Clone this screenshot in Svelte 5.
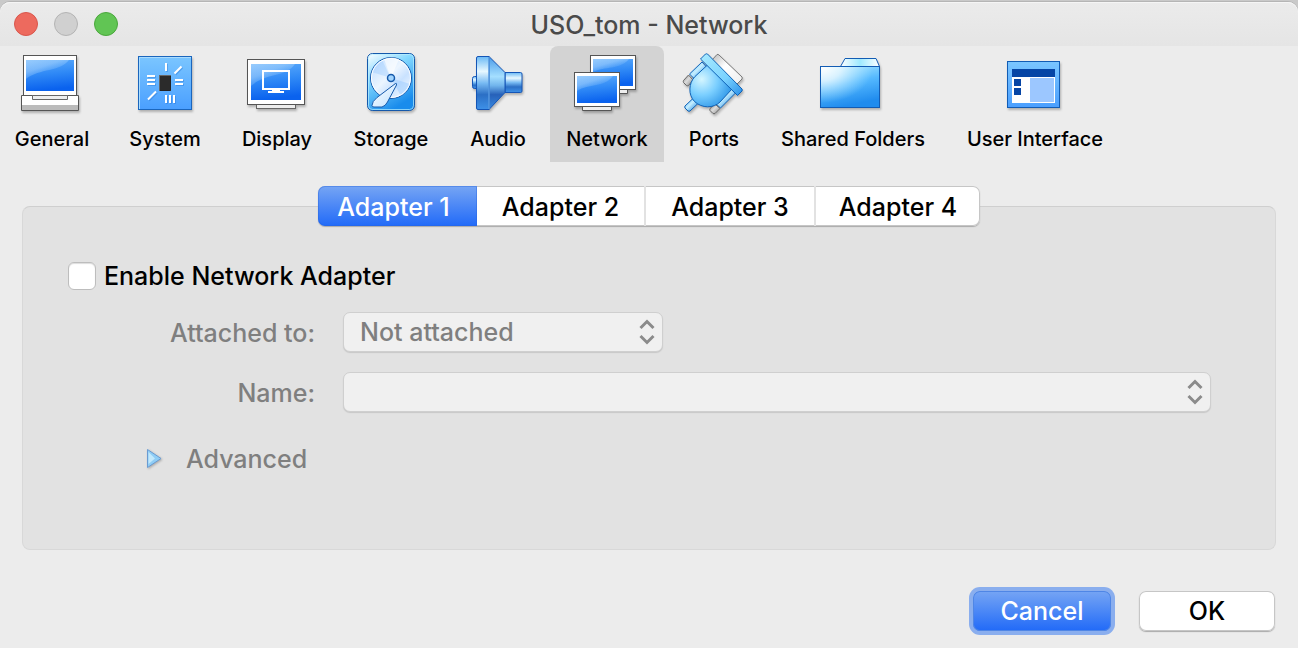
<script>
  const sections = [
    'General', 'System', 'Display', 'Storage', 'Audio',
    'Network', 'Ports', 'Shared Folders', 'User Interface'
  ];
  const adapters = ['Adapter 1', 'Adapter 2', 'Adapter 3', 'Adapter 4'];
  let section = $state('Network');
  let adapter = $state('Adapter 1');
  let enabled = $state(false);
</script>

<svelte:head><title>USO_tom - Network</title></svelte:head>

{#snippet chevrons()}
  <svg class="chevrons" viewBox="0 0 16 26" aria-hidden="true">
    <path d="M1.500 9 8 2.500l6.500 6.500M1.500 17 8 23.500l6.500-6.500" />
  </svg>
{/snippet}

{#snippet icon(name)}
  <svg class="icon" viewBox="0 0 64 64" aria-hidden="true">
    {#if name === 'General'}
      <rect x="3.500" y="5.500" width="53" height="40" fill="#fff" stroke="#555" />
      <rect x="6" y="10" width="48" height="31" fill="url(#screen)" />
      <path d="M6 10h43C40 22 20 18 6 29z" fill="url(#gloss)" />
      <path d="M1.500 45.500h57v15h-57z" fill="#fff" stroke="#555" />
      <path d="M2 55h56v5H2z" fill="#bbb" />
      <path d="M12.500 45.500h35v4h-35z" fill="#eee" stroke="#666" />
    {:else if name === 'System'}
      <rect x="5.500" y="6.500" width="53" height="53" fill="url(#board)" stroke="#1b66bd" />
      <path d="M6.500 59V7.500H58" fill="none" stroke="#a9dcff" />
      <path d="M33 13v8M41.500 23.500l7-7M14 26h8M14 30h8M14 34h8M42 30h8M42 34h8M33 45v8M37 45v8M41 45v8M15 49.500l8-8" stroke="#1c6cd0" stroke-width="2" opacity=".35" transform="translate(1 1)" />
      <path d="M33 13v8M41.500 23.500l7-7M14 26h8M14 30h8M14 34h8M42 30h8M42 34h8M33 45v8M37 45v8M41 45v8M15 49.500l8-8" stroke="#fff" stroke-width="2" />
      <rect x="26.500" y="25.500" width="11" height="15" fill="#2b2b2b" stroke="#666" />
      <path d="M37.500 26v14.500H27" fill="none" stroke="#222" />
    {:else if name === 'Display'}
      <rect x="11.500" y="54.500" width="39" height="4" fill="#eee" stroke="#666" />
      <rect x="2.500" y="9.500" width="57" height="45" fill="#fff" stroke="#555" />
      <rect x="6" y="14" width="50" height="36" fill="url(#screen)" />
      <path d="M6 14h44C40 28 22 22 6 36z" fill="url(#gloss)" />
      <path d="M18 21h26v18H18z" fill="none" stroke="#fff" stroke-width="2" />
      <path d="M27 40h8v1h4v2H23v-2h4z" fill="#fff" />
    {:else if name === 'Storage'}
      <rect x="8.500" y="3.500" width="47" height="57" rx="5" fill="url(#drive)" stroke="#1559ab" />
      <rect x="9.500" y="4.500" width="45" height="55" rx="4" fill="none" stroke="#b9efff" opacity=".7" />
      <circle cx="32" cy="28" r="20.500" fill="url(#disc)" stroke="#1559ab" />
      <path d="M32 28 12.500 22A20 20 0 0 1 23 10z" fill="#9ccbff" opacity=".4" />
      <path d="M32 28 51 34A20 20 0 0 1 42 46z" fill="#9ccbff" opacity=".5" />
      <path d="M32 28 25 9A20 20 0 0 1 40 9z" fill="#fff" opacity=".6" />
      <circle cx="32" cy="28" r="19.500" fill="none" stroke="#fff" />
      <circle cx="32" cy="28" r="3.500" fill="#a2d5ff" stroke="#1559ab" stroke-width="1.500" />
      <path d="M36.500 33.500 18 47.500q-5 4-5 8 0 1.500 2 1.500h8q3.500-1 5.500-5l9-17q0-2.500-1-1.500z" fill="url(#arm)" stroke="#1559ab" />
    {:else if name === 'Audio'}
      <rect x="6.500" y="26.500" width="7" height="12" rx="2" fill="url(#metal)" stroke="#1455b6" />
      <path d="M39 22.500h15.500q1.500 0 1.500 1.500v17q0 1.500-1.500 1.500H39z" fill="url(#metal)" stroke="#1455b6" />
      <path d="M23 6.500 39 22.500v20l-16 17z" fill="url(#cone)" stroke="#1455b6" />
      <path d="M12 6.500h11v53H12q-1.500 0-1.500-1.500V8q0-1.500 1.500-1.500z" fill="url(#metal)" stroke="#1455b6" />
      <path d="M23 7v52" stroke="#77baf4" />
    {:else if name === 'Network'}
      <path d="M40 39.500h12.500v4H40z" fill="#eee" stroke="#555" />
      <rect x="15.500" y="5.500" width="45" height="34" fill="#fff" stroke="#555" />
      <rect x="18" y="9" width="40" height="27" fill="url(#screen)" />
      <path d="M18 9h36C45 20 30 16 18 22z" fill="url(#gloss)" />
      <path d="M7.500 56.500h29v4h-29z" fill="#eee" stroke="#555" />
      <rect x="-.5" y="22.500" width="45" height="34" fill="#fff" stroke="#555" />
      <rect x="2" y="26" width="40" height="27" fill="url(#screen)" />
      <path d="M2 26h36C29 38 14 33 2 41z" fill="url(#gloss)" />
    {:else if name === 'Ports'}
      <path d="m30 10 5-5.500q1-.5 2 .5l23 22q.5 1 0 2l-6 6z" fill="url(#plug)" stroke="#777" />
      <path d="m20 12 5 5.500-12 12-5.500-5.500z" fill="url(#metalDiag)" stroke="#0e61b6" />
      <path d="m6.500 25 4.500 5-4.500 5.500q-1 .5-2 0l-3-3q-.5-1 0-2z" fill="url(#cap)" stroke="#666" />
      <path d="m48 38 5.500 5-15 15-5.500-5z" fill="url(#metalDiag)" stroke="#0e61b6" />
      <path d="m33 54 5 4.500-5 5q-1 .5-2 0l-3-3q-.5-1 0-2z" fill="url(#cap)" stroke="#666" />
      <path d="m12 47.500 5 5-9 8.500q-1 .5-2 0l-3-3q-.5-1 0-2z" fill="url(#metalDiag)" stroke="#0e61b6" />
      <path d="M26 14.500 13 26.500C6.500 33 6 45 12.500 51.500 20 58.500 31.500 58.500 38 52L50 39z" fill="url(#ball)" stroke="#0e61b6" />
      <path d="m18.500 9 5-5q1-.5 2 0l34.500 35q.5 1 0 2l-4.500 4.500z" fill="url(#plate)" stroke="#0e61b6" />
    {:else if name === 'Shared Folders'}
      <path d="m19.500 16.500 4.500-8h31l3.500 8z" fill="url(#tabfill)" stroke="#125cb4" />
      <rect x="-.5" y="16.500" width="59" height="41" fill="url(#folder)" stroke="#125cb4" />
      <rect width="58" height="40" y="17" fill="url(#foldergloss)" />
    {:else}
      <rect x="4.500" y="11.500" width="52" height="46" fill="url(#board)" stroke="#125cb4" />
      <path d="M9 19h43v34H9z" fill="#fff" />
      <path d="M9 19h43v8H9zM11 29h7v7h-7zM11 38h7v7h-7z" fill="#0645a5" />
      <path d="M27 28h24v24H27z" fill="#9cc7ff" />
    {/if}
  </svg>
{/snippet}

<svg class="defs" aria-hidden="true">
  <defs>
    <linearGradient id="screen" x2=".15" y2="1"><stop stop-color="#5cabfb" /><stop offset=".5" stop-color="#2f89f6" /><stop offset="1" stop-color="#0a62ee" /></linearGradient>
    <linearGradient id="gloss" x2=".8" y2="1"><stop stop-color="#c8e6ff" stop-opacity=".55" /><stop offset=".4" stop-color="#c0e2ff" stop-opacity=".45" /><stop offset=".75" stop-color="#a9d9ff" stop-opacity=".05" /></linearGradient>
    <linearGradient id="board" x2="0" y2="1"><stop stop-color="#7bc6ff" /><stop offset="1" stop-color="#4a9fff" /></linearGradient>
    <linearGradient id="drive" x2=".5" y2="1"><stop stop-color="#fff" /><stop offset=".4" stop-color="#83d8ff" /><stop offset="1" stop-color="#198cec" /></linearGradient>
    <linearGradient id="disc" x2="1" y2="1"><stop stop-color="#b9daff" /><stop offset=".45" stop-color="#ecf5ff" /><stop offset=".65" stop-color="#c9e2ff" /><stop offset="1" stop-color="#fff" /></linearGradient>
    <linearGradient id="arm" x2="1" y2="1"><stop stop-color="#fff" /><stop offset="1" stop-color="#bfe1ff" /></linearGradient>
    <linearGradient id="metal" x2="0" y2="1"><stop stop-color="#69b9f6" /><stop offset=".28" stop-color="#e8f8ff" /><stop offset=".5" stop-color="#78bbf3" /><stop offset=".72" stop-color="#2b6fc5" /><stop offset="1" stop-color="#3e91e8" /></linearGradient>
    <linearGradient id="cone" x2="0" y2="1"><stop stop-color="#4a9ae8" /><stop offset=".38" stop-color="#a5dfff" /><stop offset=".55" stop-color="#70b4ec" /><stop offset=".72" stop-color="#2761b9" /><stop offset="1" stop-color="#388ae0" /></linearGradient>
    <linearGradient id="metalDiag" x2="1" y2="1"><stop offset=".2" stop-color="#7cc8f8" /><stop offset=".45" stop-color="#c5eeff" /><stop offset=".8" stop-color="#3f9de8" /></linearGradient>
    <linearGradient id="cap" x2="1" y2="1"><stop stop-color="#777" /><stop offset=".45" stop-color="#ddd" /><stop offset="1" stop-color="#888" /></linearGradient>
    <linearGradient id="plate" x2="1" y2="1"><stop stop-color="#a9ebff" /><stop offset=".6" stop-color="#7ad2ff" /><stop offset="1" stop-color="#2a8fe8" /></linearGradient>
    <linearGradient id="plug" x2="1" y2="1"><stop stop-color="#bbb" /><stop offset=".4" stop-color="#fff" /><stop offset="1" stop-color="#eee" /></linearGradient>
    <radialGradient id="ball" cx=".28" cy=".35" r=".75"><stop stop-color="#d5f6ff" /><stop offset=".5" stop-color="#7bcfff" /><stop offset="1" stop-color="#2f97e8" /></radialGradient>
    <linearGradient id="tabfill" x2="1" y2="0"><stop stop-color="#fff" /><stop offset=".5" stop-color="#9feaff" /><stop offset="1" stop-color="#fff" /></linearGradient>
    <linearGradient id="folder" x2=".3" y2="1"><stop stop-color="#b5edff" /><stop offset=".5" stop-color="#55b9ff" /><stop offset="1" stop-color="#208cee" /></linearGradient>
    <radialGradient id="foldergloss" cx="0" cy="0" r="1"><stop stop-color="#fff" /><stop offset=".35" stop-color="#eefaff" stop-opacity=".8" /><stop offset=".9" stop-color="#bdeeff" stop-opacity="0" /></radialGradient>
  </defs>
</svg>

<main class="window">
  <header class="titlebar">
    <div class="lights">
      <button class="light close" aria-label="Close"></button>
      <button class="light minimise" aria-label="Minimise" disabled></button>
      <button class="light zoom" aria-label="Zoom"></button>
    </div>
    <h1>USO_tom - Network</h1>
  </header>

  <nav class="toolbar" aria-label="Settings">
    {#each sections as name}
      <button class="section" class:current={section === name} onclick={() => (section = name)}>
        {@render icon(name)}
        <span>{name}</span>
      </button>
    {/each}
  </nav>

  <section class="panel">
    <div class="tabs" role="tablist">
      {#each adapters as name}
        <button class="tab" role="tab" aria-selected={adapter === name} onclick={() => (adapter = name)}>{name}</button>
      {/each}
    </div>

    <div class="settings">
      <label class="enable">
        <input type="checkbox" bind:checked={enabled} />
        Enable Network Adapter
      </label>
      <div class="fields">
        <label for="attached">Attached to:</label>
        <div class="picker short">
          <select id="attached" disabled={!enabled}><option>Not attached</option></select>
          {@render chevrons()}
        </div>
        <label for="name">Name:</label>
        <div class="picker">
          <select id="name" disabled={!enabled}><option></option></select>
          {@render chevrons()}
        </div>
      </div>
      <button class="advanced" disabled={!enabled}>
        <svg viewBox="0 0 18 22" aria-hidden="true">
          <path d="M2.500 1.500v18L16 10.500z" fill="#8fcdf5" stroke="#6a9bd2" stroke-linejoin="round" />
          <path d="M3.500 4v12L10 10.500z" fill="#d3f0fc" opacity=".75" />
        </svg>
        Advanced
      </button>
    </div>
  </section>

  <footer>
    <button class="push primary">Cancel</button>
    <button class="push">OK</button>
  </footer>
</main>

<style>
  :global(body) {
    margin: 0;
    background: #c9c9c9;
  }
  .defs {
    position: absolute;
    width: 0;
    height: 0;
  }
  .window {
    box-sizing: border-box;
    min-height: calc(100vh - 2px);
    margin-top: 2px;
    display: flex;
    flex-direction: column;
    background: #ececec;
    border-radius: 10px 10px 0 0;
    box-shadow: 0 -1px #b5b5b5;
    font-family: Inter, "Liberation Sans", sans-serif;
    font-size: 25px;
    font-weight: 450;
    line-height: 32px;
    color: #000;
  }
  button, select {
    font: inherit;
    color: inherit;
    margin: 0;
    padding: 0;
    border: 0;
  }
  .titlebar {
    display: grid;
    grid-template-columns: 1fr auto 1fr;
    align-items: center;
    height: 44px;
    border-radius: 10px 10px 0 0;
    background: linear-gradient(#ebebeb, #e5e5e5);
    box-shadow: inset 0 1px #f5f5f5;
  }
  .lights {
    display: flex;
    gap: 16px;
    padding-left: 14px;
  }
  .light {
    width: 24px;
    height: 24px;
    border-radius: 50%;
    border: 1px solid #d9564c;
    background: #ed6a5e;
  }
  .minimise {
    border-color: #b4b4b4;
    background: #d0d0d0;
  }
  .zoom {
    border-color: #4aa73c;
    background: #61c554;
  }
  h1 {
    margin: 0;
    padding-top: 2px;
    font-size: inherit;
    font-weight: inherit;
    color: #4a4a4a;
  }
  .toolbar {
    display: grid;
    grid-template-columns: 104px 106px 102px 110px 88px 114px 84px 178px 170px;
    gap: 8px;
    height: 116px;
  }
  .section {
    display: flex;
    flex-direction: column;
    align-items: center;
    gap: 13px;
    padding-top: 4px;
    background: none;
    border-radius: 8px 8px 0 0;
    font-size: 20px;
    line-height: 24px;
    font-weight: 500;
    white-space: nowrap;
  }
  .current {
    background: #d3d3d3;
  }
  .icon {
    width: 64px;
    height: 64px;
    overflow: visible;
    filter: drop-shadow(1px 2px 1px rgb(0 0 0 / 0.25));
  }
  .panel {
    flex: 1;
    margin: 44px 22px 0;
    background: #e2e2e2;
    border: 1px solid #d8d8d8;
    border-top-color: #cfcfcf;
    border-radius: 8px;
  }
  .tabs {
    display: grid;
    grid-template-columns: 159px 167px 170px 166px;
    width: fit-content;
    height: 40px;
    margin: -21px auto 0;
    border-radius: 7px;
    background: #fff;
    box-shadow: inset 0 0 0 1px #c6c6c6, 0 1px 1px #aaa;
  }
  .tab {
    padding-top: 2px;
    background: none;
    border-left: 2px solid #e2e2e2;
  }
  .tab:first-child {
    padding-right: 8px;
    border-radius: 7px 0 0 7px;
  }
  .tab:first-child, .tab:nth-child(2) {
    border-left: 0;
  }
  .tab[aria-selected="true"] {
    background: linear-gradient(#76a5f4, #216af8);
    box-shadow: inset 0 0 0 1px rgb(40 100 220 / 0.4);
    color: #fff;
  }
  .settings {
    padding: 34px 64px 0 45px;
  }
  .enable {
    display: flex;
    align-items: center;
    gap: 8px;
    width: fit-content;
    font-weight: 500;
  }
  .enable input {
    appearance: none;
    width: 28px;
    height: 28px;
    margin: 0;
    background: #fff;
    border: 1px solid #bdbdbd;
    border-radius: 6px;
    box-shadow: inset 0 1px 1px #ddd;
  }
  .enable input:checked {
    background: #216af8;
  }
  .fields {
    display: grid;
    grid-template-columns: 247px 1fr;
    align-items: center;
    gap: 20px 28px;
    margin-top: 20px;
    color: #7f7f7f;
  }
  .fields label {
    padding-top: 2px;
    text-align: right;
  }
  .picker {
    display: grid;
    align-items: center;
  }
  .short {
    width: 320px;
  }
  .picker > :global(*) {
    grid-area: 1 / 1;
  }
  select {
    appearance: none;
    width: 100%;
    height: 40px;
    padding: 0 48px 0 16px;
    background: #f0f0f0;
    border: 1px solid #cfcfcf;
    border-radius: 7px;
    box-shadow: 0 1px 1px #c8c8c8;
    opacity: 1;
  }
  .chevrons {
    width: 16px;
    height: 26px;
    margin-right: 8px;
    justify-self: end;
    pointer-events: none;
    fill: none;
    stroke: #8b8b8b;
    stroke-width: 3;
  }
  .advanced {
    display: flex;
    align-items: center;
    gap: 23px;
    margin: 31px 0 0 77px;
    background: none;
    color: #7f7f7f;
  }
  .advanced svg {
    width: 18px;
    height: 22px;
    filter: drop-shadow(1px 1px 1px rgb(0 0 0 / 0.25));
  }
  footer {
    display: flex;
    justify-content: flex-end;
    gap: 28px;
    padding: 41px 23px 17px;
  }
  .push {
    width: 136px;
    height: 40px;
    background: #fff;
    border-radius: 7px;
    box-shadow: inset 0 0 0 1px #c6c6c6, 0 1px 1px #aaa;
    font-weight: 500;
  }
  .primary {
    width: 138px;
    background: linear-gradient(#76a5f4, #216af8);
    box-shadow: inset 0 0 0 1px #4f86e6, 0 0 0 4px #8aaeee;
    color: #fff;
    font-weight: 450;
  }
</style>
